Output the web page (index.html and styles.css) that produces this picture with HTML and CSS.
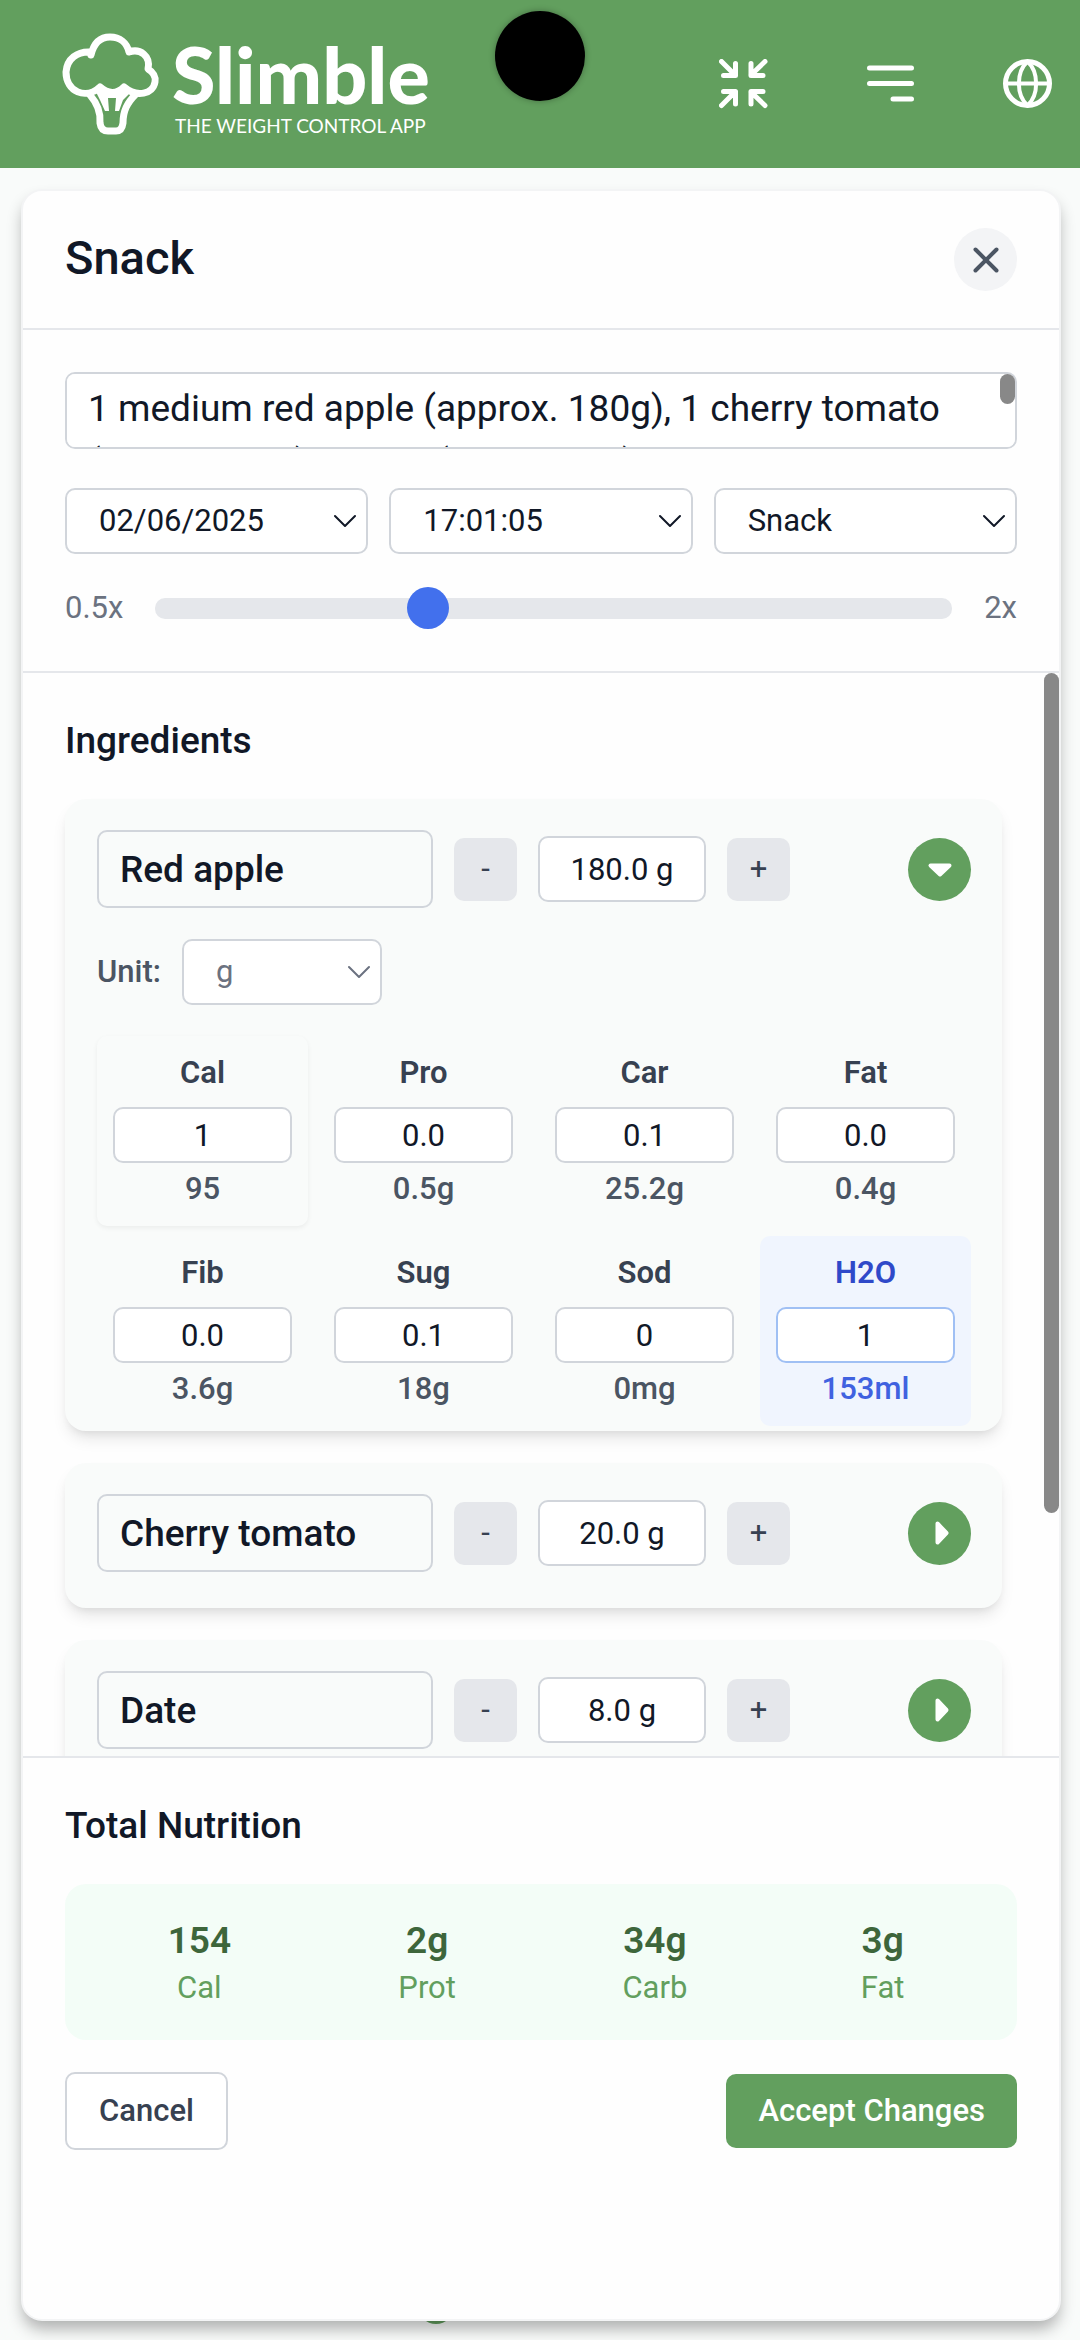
FILE: index.html
```html
<!DOCTYPE html>
<html lang="en">
<head>
    <meta charset="UTF-8">
    <meta name="viewport" content="width=device-width, initial-scale=1.0">
    <title>Slimble</title>
    <link rel="stylesheet" href="styles.css">
</head>
<body>
    <header class="topbar">
        <a class="logo" href="#">
            <svg class="logo-mark" viewBox="0 0 98 104" fill="none" stroke="currentColor" stroke-width="7">
                <path d="M29 23C32 10 39 5 48 5C58 5 65 11 67 20C78 16 89 24 86 37C91 40 94 45 93 50C91 62 75 66 62 55C55 62 46 62 38 55C24 68 4 60 4 40C5 27 15 19 29 20"/>
                <path d="M28 63C35 71 39 79 38 91Q39 99 46 99H54Q60 99 61 91C61 79 65 71 74 62"/>
                <path d="M34 60L38 54Q50 64 62 54L67 62L61 68L57 79H53L54 66H46L47 79H43L38 68Z" fill="currentColor" stroke="none"/>
            </svg>
            <span class="logo-text">
                <span class="logo-name">Slimble</span>
                <span class="logo-tag">THE WEIGHT CONTROL APP</span>
            </span>
        </a>
        <nav class="topbar-actions">
            <button type="button" aria-label="Exit full screen">
                <svg width="50" height="50" viewBox="0 0 50 50">
                    <path d="M2.5 2.5L16 16M16.5 4.5V16.5H4.5M46 2.5L32 16M32 4.5V16.5H44M2.5 46.5L16 33M16.5 45V32.5H4.5M46 46.5L32 33M32 45V32.5H44"/>
                </svg>
            </button>
            <button type="button" aria-label="Menu">
                <svg width="58" height="50" viewBox="0 0 58 50">
                    <path d="M12.5 9H54.5M12.5 24.5H54.5M36 40H54.5"/>
                </svg>
            </button>
            <button type="button" aria-label="Language">
                <svg width="50" height="50" viewBox="0 0 50 50">
                    <circle cx="24.5" cy="24.5" r="22"/>
                    <path stroke-width="4" d="M2.5 24.5H46.5M24.5 2.5C13 13 13 36 24.5 46.5C36 36 36 13 24.5 2.5Z"/>
                </svg>
            </button>
        </nav>
        <div class="camera"></div>
    </header>

    <div class="fab"></div>

    <main class="modal">
        <div class="modal-header">
            <h1>Snack</h1>
            <button type="button" class="close" aria-label="Close">
                <svg width="26" height="26" viewBox="0 0 26 26"><path d="M2.5 2.5L23.5 23.5M23.5 2.5L2.5 23.5"/></svg>
            </button>
        </div>

        <section class="meal">
            <div class="description">
                <textarea aria-label="Description">1 medium red apple (approx. 180g), 1 cherry tomato (approx. 20g), 1 date (approx. 8g)

</textarea>
                <div class="scroll-thumb"></div>
            </div>
            <div class="meal-fields">
                <div class="select">
                    <select aria-label="Date"><option>02/06/2025</option></select>
                    <svg width="22" height="14" viewBox="0 0 22 14"><path d="M1 2L11 12L21 2"/></svg>
                </div>
                <div class="select">
                    <select aria-label="Time"><option>17:01:05</option></select>
                    <svg width="22" height="14" viewBox="0 0 22 14"><path d="M1 2L11 12L21 2"/></svg>
                </div>
                <div class="select">
                    <select aria-label="Meal"><option>Snack</option></select>
                    <svg width="22" height="14" viewBox="0 0 22 14"><path d="M1 2L11 12L21 2"/></svg>
                </div>
            </div>
            <div class="portion">
                <label for="portion">0.5x</label>
                <input type="range" id="portion" min="0.5" max="2" step="0.1" value="1">
                <span>2x</span>
            </div>
        </section>

        <section class="modal-body">
            <div class="ingredients">
                <h2>Ingredients</h2>

                <article class="ingredient">
                    <div class="ingredient-row">
                        <input type="text" class="name" aria-label="Name" value="Red apple">
                        <button type="button" class="step">-</button>
                        <input type="text" class="amount" aria-label="Amount" value="180.0 g">
                        <button type="button" class="step">+</button>
                        <button type="button" class="toggle" aria-label="Collapse">
                            <svg width="26" height="26" viewBox="0 0 26 26"><path d="M3.5 9.5H22.5L13 18.5Z"/></svg>
                        </button>
                    </div>
                    <div class="unit-row">
                        <label for="unit">Unit:</label>
                        <div class="select unit">
                            <select id="unit"><option>g</option></select>
                            <svg width="22" height="14" viewBox="0 0 22 14"><path d="M1 2L11 12L21 2"/></svg>
                        </div>
                    </div>
                    <div class="nutrients">
                        <div class="nutrient raised">
                            <label for="cal">Cal</label>
                            <input type="text" id="cal" value="1">
                            <output>95</output>
                        </div>
                        <div class="nutrient">
                            <label for="pro">Pro</label>
                            <input type="text" id="pro" value="0.0">
                            <output>0.5g</output>
                        </div>
                        <div class="nutrient">
                            <label for="car">Car</label>
                            <input type="text" id="car" value="0.1">
                            <output>25.2g</output>
                        </div>
                        <div class="nutrient">
                            <label for="fat">Fat</label>
                            <input type="text" id="fat" value="0.0">
                            <output>0.4g</output>
                        </div>
                        <div class="nutrient">
                            <label for="fib">Fib</label>
                            <input type="text" id="fib" value="0.0">
                            <output>3.6g</output>
                        </div>
                        <div class="nutrient">
                            <label for="sug">Sug</label>
                            <input type="text" id="sug" value="0.1">
                            <output>18g</output>
                        </div>
                        <div class="nutrient">
                            <label for="sod">Sod</label>
                            <input type="text" id="sod" value="0">
                            <output>0mg</output>
                        </div>
                        <div class="nutrient water">
                            <label for="h2o">H2O</label>
                            <input type="text" id="h2o" value="1">
                            <output>153ml</output>
                        </div>
                    </div>
                </article>

                <article class="ingredient">
                    <div class="ingredient-row">
                        <input type="text" class="name" aria-label="Name" value="Cherry tomato">
                        <button type="button" class="step">-</button>
                        <input type="text" class="amount" aria-label="Amount" value="20.0 g">
                        <button type="button" class="step">+</button>
                        <button type="button" class="toggle" aria-label="Expand">
                            <svg width="26" height="26" viewBox="0 0 26 26"><path d="M10.5 3.5V22.5L19.5 13Z"/></svg>
                        </button>
                    </div>
                </article>

                <article class="ingredient">
                    <div class="ingredient-row">
                        <input type="text" class="name" aria-label="Name" value="Date">
                        <button type="button" class="step">-</button>
                        <input type="text" class="amount" aria-label="Amount" value="8.0 g">
                        <button type="button" class="step">+</button>
                        <button type="button" class="toggle" aria-label="Expand">
                            <svg width="26" height="26" viewBox="0 0 26 26"><path d="M10.5 3.5V22.5L19.5 13Z"/></svg>
                        </button>
                    </div>
                </article>
            </div>
            <div class="scroll-thumb"></div>
        </section>

        <footer class="modal-footer">
            <h2>Total Nutrition</h2>
            <dl class="totals">
                <div><dd>154</dd><dt>Cal</dt></div>
                <div><dd>2g</dd><dt>Prot</dt></div>
                <div><dd>34g</dd><dt>Carb</dt></div>
                <div><dd>3g</dd><dt>Fat</dt></div>
            </dl>
            <div class="actions">
                <button type="button" class="cancel">Cancel</button>
                <button type="button" class="accept">Accept Changes</button>
            </div>
        </footer>
    </main>
</body>
</html>
```

FILE: styles.css
```css
* {
    box-sizing: border-box;
}
body {
    font-family: Roboto, sans-serif;
    font-size: 31px;
    line-height: 42px;
    margin: 0;
    height: 100vh;
    display: flex;
    flex-direction: column;
    position: relative;
    background-color: #f9fbfa;
    color: #111827;
}
h1, h2, dl, dd {
    margin: 0;
}
h1 {
    font-size: 47px;
    font-weight: 500;
    padding-bottom: 4px;
}
h2 {
    font-size: 37px;
    line-height: 52px;
    font-weight: 500;
    margin-bottom: 32px;
}
button, input, select, textarea {
    font: inherit;
    color: inherit;
    margin: 0;
}
button {
    border: none;
    padding: 0;
    cursor: pointer;
}
svg {
    display: block;
    fill: none;
    stroke: currentColor;
    stroke-linecap: round;
    stroke-linejoin: round;
}

/* top bar */
.topbar {
    flex: none;
    height: 168px;
    padding: 0 27px 0 62px;
    display: flex;
    align-items: center;
    justify-content: space-between;
    background-color: #629f5e;
    color: white;
    position: relative;
}
.logo {
    display: flex;
    gap: 12px;
    color: white;
    text-decoration: none;
    font-family: Lato, sans-serif;
}
.logo-mark {
    width: 98px;
    height: 104px;
}
.logo-text {
    display: flex;
    flex-direction: column;
}
.logo-name {
    font-size: 79px;
    line-height: 84px;
    font-weight: 900;
}
.logo-tag {
    font-size: 19px;
    line-height: 20px;
    padding-left: 3px;
}
.topbar-actions {
    display: flex;
    gap: 88px;
}
.topbar-actions button {
    background: none;
    color: white;
}
.topbar-actions svg {
    stroke-width: 5;
}
.camera {
    position: absolute;
    top: 11px;
    left: 50%;
    width: 90px;
    height: 90px;
    margin-left: -45px;
    border-radius: 50%;
    background-color: black;
    box-shadow: 0 0 6px rgba(0, 0, 0, 0.3);
}
.fab {
    position: absolute;
    bottom: 16px;
    left: 418px;
    width: 36px;
    height: 36px;
    border-radius: 50%;
    background-color: #629f5e;
}

/* modal */
.modal {
    flex: 1;
    min-height: 0;
    margin: 21px 19px 19px 21px;
    display: flex;
    flex-direction: column;
    position: relative;
    background-color: #fefefe;
    border: 2px solid #f3f4f5;
    border-radius: 21px;
    box-shadow: 0 10px 16px -2px rgba(0, 0, 0, 0.3);
}
.modal-header {
    display: flex;
    align-items: center;
    justify-content: space-between;
    padding: 37px 42px;
    border-bottom: 2px solid #e5e7eb;
}
.close {
    width: 63px;
    height: 63px;
    border-radius: 50%;
    display: grid;
    place-items: center;
    background-color: #f3f4f6;
    color: #4b5563;
}
.close svg {
    stroke-width: 4;
}
.meal {
    padding: 42px;
    border-bottom: 2px solid #e5e7eb;
}
textarea, select, input[type="text"] {
    border: 2px solid #d1d5db;
    border-radius: 10px;
    background-color: white;
    outline: none;
}
.description {
    position: relative;
    margin-bottom: 39px;
}
textarea {
    display: block;
    width: 100%;
    height: 77px;
    padding: 8px 36px 8px 21px;
    font-size: 37px;
    line-height: 54px;
    resize: none;
    overflow-y: scroll;
    scrollbar-width: none;
}
/* overlay scrollbars */
.scroll-thumb {
    position: absolute;
    top: 0;
    right: 0;
    width: 15px;
    height: 77.6%;
    border-radius: 8px;
    background-color: #888;
}
.description .scroll-thumb {
    top: 2px;
    right: 2px;
    height: 30px;
}
.meal-fields {
    display: grid;
    grid-template-columns: repeat(3, 1fr);
    gap: 21px;
    margin-bottom: 33px;
}
.select {
    position: relative;
}
.select select {
    display: block;
    width: 100%;
    height: 66px;
    padding: 0 32px;
    appearance: none;
}
.select svg {
    position: absolute;
    right: 12px;
    top: 26px;
    stroke-width: 2;
    pointer-events: none;
}
.portion {
    display: flex;
    align-items: center;
    gap: 32px;
    color: #6b7280;
}
.portion input {
    flex: 1;
    height: 21px;
    appearance: none;
    border-radius: 10px;
    background-color: #e5e7eb;
}
.portion input::-webkit-slider-thumb {
    appearance: none;
    width: 42px;
    height: 42px;
    border-radius: 50%;
    background-color: #4270ed;
}

/* ingredient list */
.modal-body {
    flex: 1;
    min-height: 0;
    position: relative;
}
.ingredients {
    height: 100%;
    overflow-y: scroll;
    scrollbar-width: none;
    padding: 42px 57px 284px 42px;
}
.ingredient {
    padding: 31px 31px 5px 32px;
    margin-bottom: 32px;
    border-radius: 21px;
    background-color: #f9fbfa;
    box-shadow: 0 10px 16px -3px rgba(0, 0, 0, 0.1), 0 5px 10px -5px rgba(0, 0, 0, 0.1);
}
.ingredient-row {
    display: flex;
    align-items: center;
    gap: 21px;
    margin-bottom: 31px;
}
.ingredient-row .name {
    width: 336px;
    height: 78px;
    padding: 0 21px;
    font-size: 37px;
    font-weight: 500;
    background: none;
}
.ingredient-row .amount {
    width: 168px;
    height: 66px;
    text-align: center;
}
.step {
    width: 63px;
    height: 63px;
    border-radius: 10px;
    background-color: #e5e7eb;
    color: #374151;
}
.toggle {
    width: 63px;
    height: 63px;
    margin-left: auto;
    border-radius: 50%;
    display: grid;
    place-items: center;
    background-color: #629f5e;
    color: white;
}
.toggle svg {
    fill: currentColor;
    stroke-width: 4;
}
.unit-row {
    display: flex;
    align-items: center;
    gap: 21px;
    margin-bottom: 31px;
    color: #4b5563;
    font-weight: 500;
}
.unit {
    width: 200px;
    color: #6b7280;
    font-weight: 400;
}
.nutrients {
    display: grid;
    grid-template-columns: repeat(4, 1fr);
    gap: 10px;
}
.nutrient {
    display: flex;
    flex-direction: column;
    padding: 16px;
    border-radius: 10px;
    text-align: center;
    font-weight: 500;
    color: #4b5563;
}
.nutrient label {
    margin-bottom: 13px;
    font-weight: 600;
    color: #374151;
}
.nutrient input[type="text"] {
    width: 100%;
    height: 56px;
    margin-bottom: 5px;
    text-align: center;
    font-weight: 400;
    color: #111827;
}
.raised {
    box-shadow: 0 2px 5px rgba(0, 0, 0, 0.06);
}
.water {
    background-color: #f0f5fe;
    color: #4062e0;
}
.water label {
    color: #2f49c9;
}
.water input[type="text"] {
    border-color: #a0c0f4;
}

/* totals and buttons */
.modal-footer {
    padding: 42px 42px 169px;
    border-top: 2px solid #e5e7eb;
}
.totals {
    display: grid;
    grid-template-columns: repeat(4, 1fr);
    gap: 21px;
    padding: 31px;
    margin-bottom: 32px;
    border-radius: 21px;
    background-color: #f3fdf7;
    text-align: center;
    color: #629f5e;
}
.totals dd {
    font-size: 37px;
    line-height: 52px;
    font-weight: 600;
    color: #3d663b;
}
.actions {
    display: flex;
    align-items: center;
    justify-content: space-between;
}
.actions button {
    padding: 16px 32px;
    border-radius: 10px;
    font-weight: 500;
}
.cancel {
    border: 2px solid #d1d5db;
    background-color: white;
    color: #374151;
}
.accept {
    background-color: #629f5e;
    color: white;
}
```
